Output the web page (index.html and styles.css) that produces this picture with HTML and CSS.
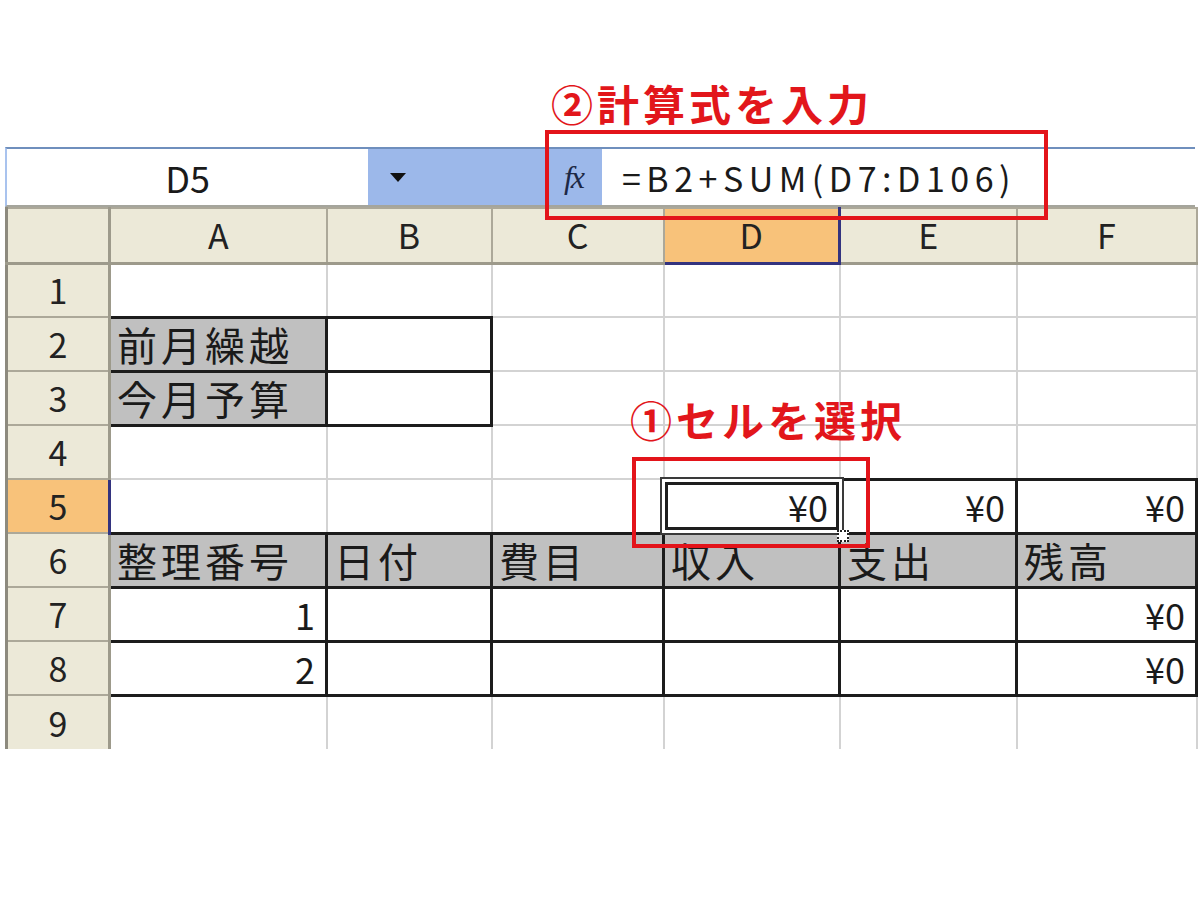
FILE: index.html
```html
<!DOCTYPE html>
<html lang="ja">
<head>
  <meta charset="UTF-8">
  <title>家計簿 - 残高の計算式</title>
  <link rel="stylesheet" href="styles.css">
</head>
<body>
  <div class="page">
    <div class="sheet">
      <div class="formula-bar">
        <div class="name-box">D5</div>
        <div class="name-drop"><span class="arrow"></span></div>
        <div class="fx">fx</div>
        <div class="formula">=B2+SUM(D7:D106)</div>
      </div>

      <table class="grid">
        <colgroup>
          <col class="c-head">
          <col class="c-a">
          <col class="c-b">
          <col class="c-c">
          <col class="c-d">
          <col class="c-e">
          <col class="c-f">
        </colgroup>
        <tr class="col-heads">
          <th class="corner"></th>
          <th>A</th>
          <th>B</th>
          <th>C</th>
          <th class="active">D</th>
          <th>E</th>
          <th>F</th>
        </tr>
        <tr>
          <th>1</th>
          <td></td><td></td><td></td><td></td><td></td><td></td>
        </tr>
        <tr>
          <th>2</th>
          <td class="box label">前月繰越</td>
          <td class="box"></td>
          <td></td><td></td><td></td><td></td>
        </tr>
        <tr>
          <th>3</th>
          <td class="box label">今月予算</td>
          <td class="box"></td>
          <td></td><td></td><td></td><td></td>
        </tr>
        <tr>
          <th>4</th>
          <td></td><td></td><td></td><td></td><td></td><td></td>
        </tr>
        <tr>
          <th class="active">5</th>
          <td></td><td></td><td></td>
          <td class="box-open money sel">¥0<span class="sel-frame"></span><span class="fill-handle"></span></td>
          <td class="box-open money">¥0</td>
          <td class="box-open money">¥0</td>
        </tr>
        <tr>
          <th>6</th>
          <td class="box label">整理番号</td>
          <td class="box label">日付</td>
          <td class="box label">費目</td>
          <td class="box label">収入</td>
          <td class="box label">支出</td>
          <td class="box label">残高</td>
        </tr>
        <tr>
          <th>7</th>
          <td class="box num">1</td>
          <td class="box"></td><td class="box"></td><td class="box"></td><td class="box"></td>
          <td class="box money">¥0</td>
        </tr>
        <tr>
          <th>8</th>
          <td class="box num">2</td>
          <td class="box"></td><td class="box"></td><td class="box"></td><td class="box"></td>
          <td class="box money">¥0</td>
        </tr>
        <tr class="last">
          <th>9</th>
          <td></td><td></td><td></td><td></td><td></td><td></td>
        </tr>
      </table>
    </div>

    <!-- 手順の注記 -->
    <div class="note note-formula">②計算式を入力</div>
    <div class="callout callout-formula"></div>
    <div class="note note-cell">①セルを選択</div>
    <div class="callout callout-cell"></div>
  </div>
</body>
</html>
```

FILE: styles.css
```css
body {
  margin: 0;
  background: #fff;
  font-family: "Noto Sans CJK JP", sans-serif;
  color: #1a1a1a;
}

.page {
  position: relative;
  width: 1200px;
  height: 900px;
}

.sheet {
  padding: 147px 5px 0 5px;
}

/* 名前ボックスと数式バー */
.formula-bar {
  display: flex;
  height: 56px;
  border-top: 2px solid #6f8fbd;
  border-bottom: 2px solid #a5a59c;
  border-left: 2px solid #a9c3ee;
}

.name-box {
  width: 361px;
  background: #fff;
  display: flex;
  align-items: center;
  justify-content: center;
  font-size: 36px;
}

.name-drop {
  width: 177px;
  background: #9cb8ea;
  display: flex;
  align-items: center;
  padding-left: 22px;
  box-sizing: border-box;
}

.arrow {
  width: 0;
  height: 0;
  border-left: 8px solid transparent;
  border-right: 8px solid transparent;
  border-top: 9px solid #111;
}

.fx {
  width: 57px;
  background: #9cb8ea;
  display: flex;
  align-items: center;
  justify-content: center;
  font-family: "Liberation Serif", serif;
  font-style: italic;
  font-size: 32px;
  letter-spacing: -2px;
  color: #1d2846;
}

.formula {
  flex: 1;
  background: #fff;
  display: flex;
  align-items: center;
  padding-left: 20px;
  font-size: 34px;
  letter-spacing: 5.5px;
}

/* シート本体 */
.grid {
  border-collapse: collapse;
  table-layout: fixed;
  width: 1190px;
}

.c-head { width: 103px; }
.c-a { width: 217px; }
.c-b { width: 165px; }
.c-c { width: 172px; }
.c-d { width: 176px; }
.c-e { width: 177px; }
.c-f { width: 180px; }

.grid tr {
  height: 54px;
}

.grid .col-heads {
  height: 55px;
}

.grid td,
.grid th {
  padding: 0;
  line-height: 1;
  vertical-align: middle;
  font-weight: 400;
}

.grid td {
  border: 2px solid #d3d3d3;
  background: #fff;
}

.grid th {
  background: #ece9d8;
  border: 2px solid #aca899;
  font-size: 34px;
  color: #222;
  text-align: center;
}

.col-heads th {
  border-bottom: 3px solid #9d9a8b;
}

.grid tr > th:first-child {
  border-left: 3px solid #8d8a7e;
  border-right: 3px solid #9d9a8b;
}

.grid th.active {
  background: #f8c27a;
}

.col-heads th.active {
  border-right: 3px solid #33337f;
  border-bottom: 3px solid #33337f;
}

.grid tr > th.active:first-child {
  border-right: 3px solid #33337f;
}

.last td,
.last th {
  border-bottom: none;
}

/* 罫線で囲んだセル */
.grid td.box {
  border: 3px solid #1c1c1c;
}

.grid td.box-open {
  border-top: 3px solid #1c1c1c;
  border-left: 3px solid #1c1c1c;
  border-right: 3px solid #1c1c1c;
}

.grid td.label {
  background: #c0c0c0;
  font-size: 40px;
  letter-spacing: 4px;
  padding-left: 6px;
  white-space: nowrap;
}

.grid td.num,
.grid td.money {
  text-align: right;
  font-size: 36px;
  padding-right: 10px;
}

/* アクティブセル */
.sel {
  position: relative;
}

.sel-frame {
  position: absolute;
  top: -4px;
  left: -5px;
  right: -6px;
  bottom: -3px;
  border: 2px solid #3a3a3a;
  box-shadow: inset 0 0 0 3px #fff, inset 0 0 0 6px #1e1e1e;
}

.fill-handle {
  position: absolute;
  right: -11px;
  bottom: -10px;
  width: 8px;
  height: 8px;
  background: #fff;
  border: 2px dotted #222;
}

/* 注記 */
.note {
  position: absolute;
  color: #e2161b;
  font-weight: 700;
  font-size: 42px;
  letter-spacing: 4px;
  line-height: 1;
  white-space: nowrap;
}

.note-formula {
  left: 551px;
  top: 82px;
}

.note-cell {
  left: 630px;
  top: 398px;
}

.callout {
  position: absolute;
  border: 4px solid #e3141a;
  box-sizing: border-box;
}

.callout-formula {
  left: 545px;
  top: 130px;
  width: 503px;
  height: 90px;
}

.callout-cell {
  left: 632px;
  top: 457px;
  width: 238px;
  height: 91px;
}
```
